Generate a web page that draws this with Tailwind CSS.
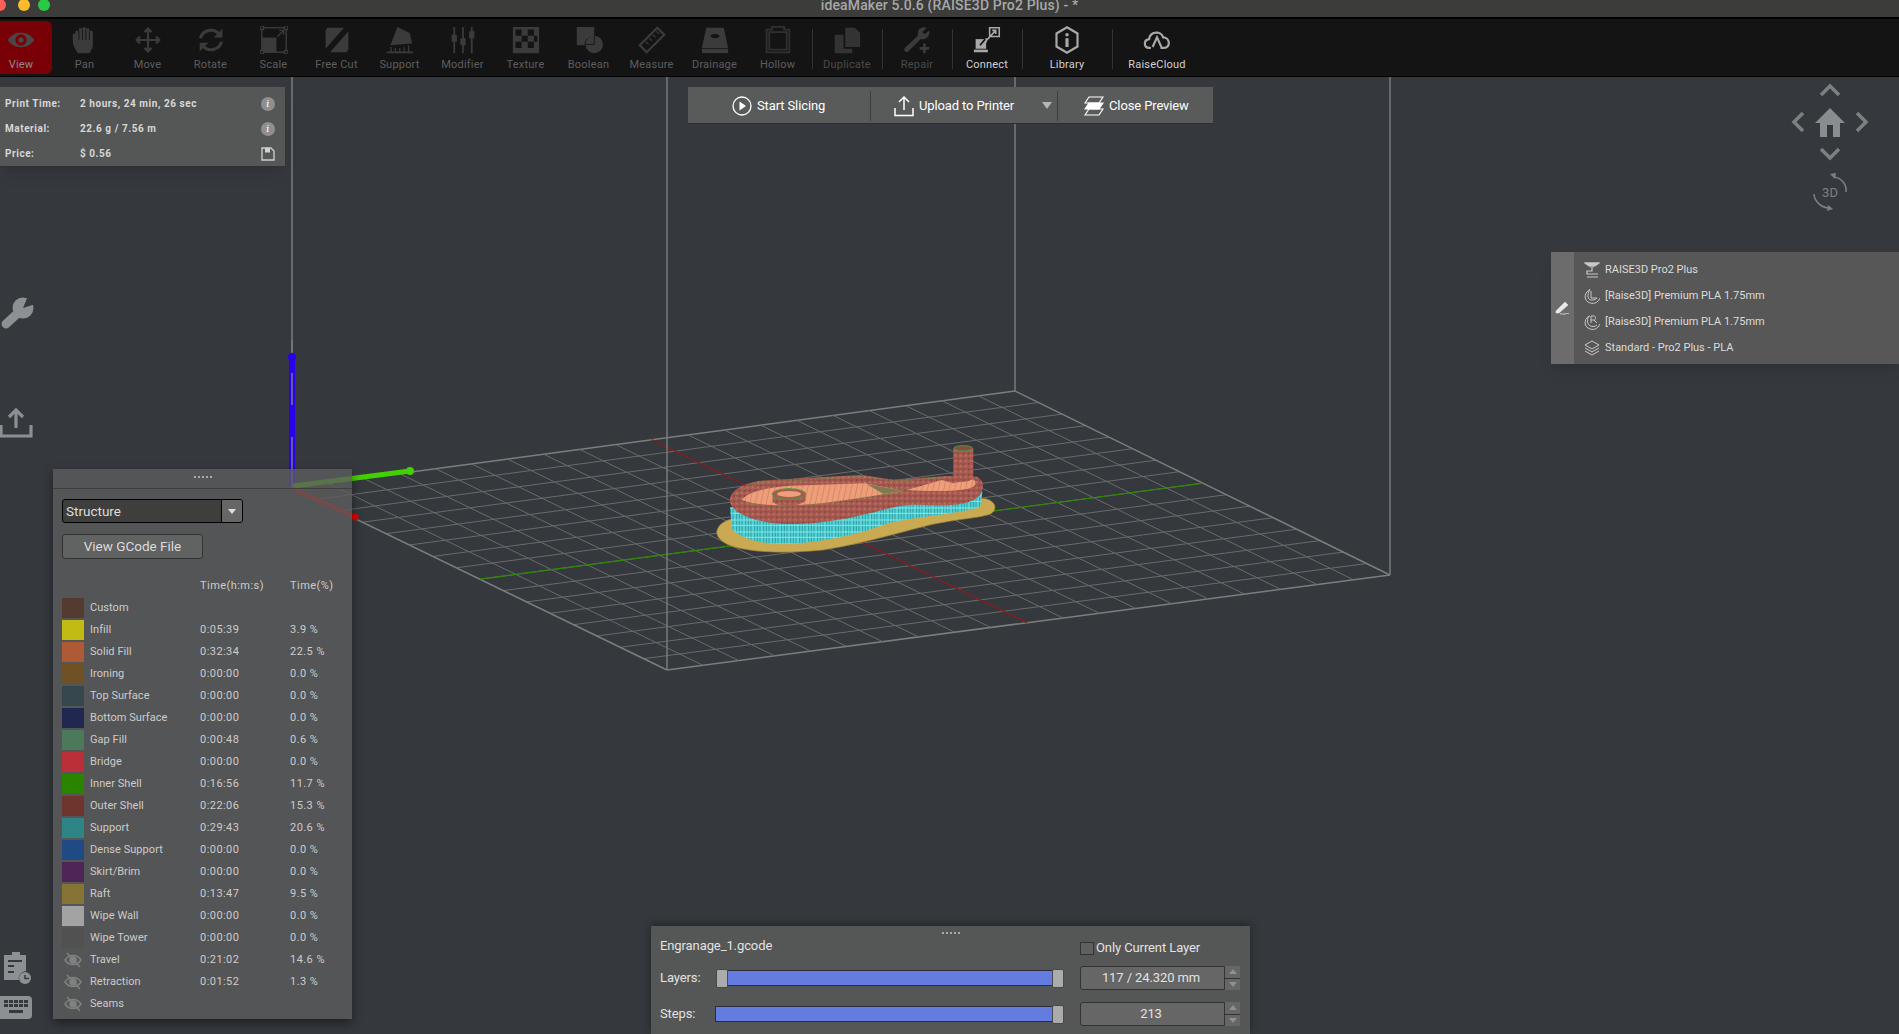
<!DOCTYPE html>
<html lang="en">
<head>
<meta charset="UTF-8">
<title>ideaMaker</title>
<script src="https://cdn.jsdelivr.net/npm/@tailwindcss/browser@4"></script>
</head>
<body class="bg-[#35393e] font-['Roboto',sans-serif] overflow-hidden">
<div class="relative w-[1899px] h-[1034px] overflow-hidden">

  <!-- 3D scene -->
  <svg id="scene" class="absolute inset-0" width="1899" height="1034" viewBox="0 0 1899 1034" fill="none">
    <defs>
      <pattern id="sup" width="27" height="36" patternUnits="userSpaceOnUse">
        <rect width="27" height="36" fill="#52d3d6"/>
        <path d="M5 0v36M13 0v36M21 0v36" stroke="#2f9ba3" stroke-width="3"/>
        <path d="M0 12h27M0 28h27" stroke="#86e8e8" stroke-width="3"/>
      </pattern>
      <pattern id="shell" width="16" height="16" patternUnits="userSpaceOnUse">
        <rect width="16" height="16" fill="#a85a50"/>
        <circle cx="4" cy="4" r="2.500" fill="#75393a"/>
        <circle cx="12" cy="11" r="2.500" fill="#c78070"/>
        <circle cx="12" cy="3" r="1.500" fill="#8c4a44"/>
      </pattern>
      <pattern id="fill" width="16" height="16" patternUnits="userSpaceOnUse" patternTransform="rotate(12)">
        <rect width="16" height="16" fill="#ee9e7a"/>
        <path d="M4 0v16" stroke="#d98562" stroke-width="3"/>
      </pattern>
    </defs>
    <g id="grid"></g>
    <path d="M292 76V488M1015 76V391M1390 76V575M667 76V670" stroke="#777b7e" stroke-width="1.5"/>
    <!-- axes -->
    <path d="M292 357V488" stroke="#2a00f0" stroke-width="6"/>
    <circle cx="292" cy="357" r="4" fill="#2a00f0"/>
    <path d="M292 340V352M292 373V405M292 437V488" stroke="#777b7e" stroke-width="1.5"/>
    <path d="M293 486L410 471" stroke="#42d000" stroke-width="5"/>
    <circle cx="410" cy="471" r="4" fill="#42d000"/>
    <path d="M293 489L355 517" stroke="#e00000" stroke-width="4"/>
    <circle cx="355" cy="517" r="3.5" fill="#e00000"/>
    <!-- printed model, drawn in a 3x space -->
    <g transform="translate(690 420) scale(.3333)">
      <path d="M80 335C85 312 105 302 130 295L880 235C915 240 925 265 905 280C880 295 800 295 700 320C600 345 520 370 400 390C300 400 200 400 130 380C100 370 80 355 80 335Z" fill="#c9aa52" stroke="#8f7a35" stroke-width="2"/>
      <path d="M120 262L125 325C150 360 230 375 300 372C400 365 500 345 600 308C680 290 780 285 870 262L878 215L500 240Z" fill="url(#sup)"/>
      <path d="M120 235C125 210 160 190 210 182L510 165C560 170 600 182 640 178L770 168L860 170C882 180 884 202 870 225C850 250 800 260 700 255C640 250 600 265 540 280C480 295 400 310 320 312C250 315 180 300 150 280C125 265 118 250 120 235Z" fill="url(#shell)"/>
      <path d="M155 240C175 215 225 203 300 197L525 190L640 212C590 222 520 232 430 245C340 258 210 262 155 240Z" fill="url(#fill)"/>
      <path d="M650 210L755 180L790 190L850 178C862 188 858 200 835 206C780 216 700 214 650 210Z" fill="url(#fill)"/>
      <path d="M530 192L640 212L580 222Z" fill="#7f7a50"/>
      <path d="M136 232C150 205 190 192 240 186L510 170C560 172 600 186 640 182L770 172M150 244C200 265 340 260 430 247C520 234 590 224 650 212" stroke="#6f9a40" stroke-width="4" stroke-dasharray="3 6"/>
      <path d="M248 222V245C260 262 335 262 347 240V222Z" fill="url(#shell)"/>
      <ellipse cx="297" cy="222" rx="50" ry="16" fill="#a85a50" stroke="#4a9a3a" stroke-width="3"/>
      <ellipse cx="297" cy="222" rx="36" ry="9" fill="#ee9e7a"/>
      <path d="M790 85V172C800 190 840 190 850 172V85Z" fill="url(#shell)"/>
      <ellipse cx="820" cy="85" rx="28" ry="8" fill="#8c4a44" stroke="#4a9a3a" stroke-width="3"/>
    </g>
  </svg>

  <!-- title bar -->
  <header class="relative h-[19px] bg-[#3c3c3b] border-b-2 border-black overflow-hidden flex justify-center">
    <span class="absolute left-[-6px] top-[-1px] w-3 h-3 rounded-full bg-[#fb5f58]"></span>
    <span class="absolute left-[18px] top-[-1px] w-3 h-3 rounded-full bg-[#fdbc2f]"></span>
    <span class="absolute left-[38px] top-[-1px] w-3 h-3 rounded-full bg-[#29c941]"></span>
    <span class="mt-[-5px] text-[14px] leading-5 font-medium text-[#a8a8a8] tracking-[.15px]">ideaMaker 5.0.6 (RAISE3D Pro2 Plus) - *</span>
  </header>

  <!-- toolbar -->
  <nav class="relative h-[58px] bg-[#141414] border-b border-black flex items-stretch text-[11px] text-center tracking-[.2px] text-[#5e5e5e]">
    <div class="w-[52px] h-[53px] mt-[2px] bg-[#7a0008] rounded-r-md flex flex-col items-center pt-[5px] pr-[10px] text-[#8d8d8d] shrink-0">
      <svg width="28" height="28" viewBox="0 0 32 32"><path d="M1 16C8 5 24 5 31 16C24 27 8 27 1 16Z" fill="#4b4648"/><circle cx="16" cy="16" r="6.5" fill="#7a0008"/><circle cx="16" cy="16" r="3" fill="#4b4648"/></svg>
      <span class="mt-[5px] leading-3">View</span>
    </div>
    <div class="w-[63px] ml-px pt-[7px] flex flex-col items-center shrink-0">
      <svg width="28" height="28" viewBox="0 0 32 32" fill="#3b3b3b"><path d="M8 31C4 26 2 22 2 16V10c0-2 3-2 3 0v-3c0-2 4-2 4 0V4c0-2 4-2 4 0V3c0-2 4-2 4 0v1c0-2 4-2 4 0v3c0-2 4-2 4 0v14c0 4-2 7-4 10Z"/><path d="M9 5V16M13 4V16M17 4V16M21 6V16" stroke="#141414" stroke-width="1"/></svg>
      <span class="mt-[5px] leading-3">Pan</span>
    </div>
    <div class="w-[63px] pt-[7px] flex flex-col items-center shrink-0">
      <svg width="28" height="28" viewBox="0 0 32 32" stroke="#3b3b3b" stroke-width="2.5" fill="none"><path d="M16 3V29M3 16H29M12 7l4-4 4 4M12 25l4 4 4-4M7 12l-4 4 4 4M25 12l4 4-4 4"/></svg>
      <span class="mt-[5px] leading-3">Move</span>
    </div>
    <div class="w-[63px] pt-[7px] flex flex-col items-center shrink-0">
      <svg width="28" height="28" viewBox="0 0 32 32" stroke="#3b3b3b" stroke-width="3.5" fill="none"><path d="M4 14C6 5 19 1 26 10M28 18C26 27 13 31 6 22"/><path d="M29 3v10H19z" fill="#3b3b3b" stroke="none"/><path d="M3 29V19h10z" fill="#3b3b3b" stroke="none"/></svg>
      <span class="mt-[5px] leading-3">Rotate</span>
    </div>
    <div class="w-[63px] pt-[7px] flex flex-col items-center shrink-0">
      <svg width="28" height="28" viewBox="0 0 32 32" stroke="#3b3b3b" stroke-width="1.6" fill="none"><rect x="2" y="2" width="28" height="28"/><rect x="2" y="14" width="16" height="16" fill="#3b3b3b"/><path d="M20 12l7-7M22 5h5v5"/><rect x="0" y="0" width="4" height="4" fill="#141414"/><rect x="28" y="0" width="4" height="4" fill="#141414"/><rect x="0" y="28" width="4" height="4" fill="#141414"/><rect x="28" y="28" width="4" height="4" fill="#141414"/></svg>
      <span class="mt-[5px] leading-3">Scale</span>
    </div>
    <div class="w-[63px] pt-[7px] flex flex-col items-center shrink-0">
      <svg width="28" height="28" viewBox="0 0 32 32" fill="#3b3b3b"><path d="M5 2H24L3 26V5ZM29 6V27L27 30H8Z"/></svg>
      <span class="mt-[5px] leading-3">Free Cut</span>
    </div>
    <div class="w-[63px] pt-[7px] flex flex-col items-center shrink-0">
      <svg width="28" height="28" viewBox="0 0 32 32" fill="#3b3b3b"><path d="M13 1L27 8L30 20L5 22ZM1 29H31V31H1ZM5 24h1.500v5H5ZM10 25h1.500v4H10ZM15 25h1.500v4H15ZM20 24h1.500v5H20ZM25 22h1.500v7H25Z"/></svg>
      <span class="mt-[5px] leading-3">Support</span>
    </div>
    <div class="w-[63px] pt-[7px] flex flex-col items-center shrink-0">
      <svg width="28" height="28" viewBox="0 0 32 32" fill="#3b3b3b"><path d="M5 1h2v9h2v8H7v13H5V18H3v-8h2ZM15 1h2v13h2v8h-2v9h-2v-9h-2v-8h2ZM25 1h2v5h2v8h-2v17h-2V14h-2V6h2Z"/></svg>
      <span class="mt-[5px] leading-3">Modifier</span>
    </div>
    <div class="w-[63px] pt-[7px] flex flex-col items-center shrink-0">
      <svg width="28" height="28" viewBox="0 0 32 32" fill="#3b3b3b"><path fill-rule="evenodd" d="M1 1H31V31H1ZM4 4V11H11V4ZM18 4V11H25V4ZM11 11V18H18V11ZM25 11V18H29V11ZM4 18V25H11V18ZM18 18V25H25V18Z"/></svg>
      <span class="mt-[5px] leading-3">Texture</span>
    </div>
    <div class="w-[63px] pt-[7px] flex flex-col items-center shrink-0">
      <svg width="28" height="28" viewBox="0 0 32 32" fill="#3b3b3b"><path d="M2 1H22V12C14 12 11 17 11 22H2Z"/><circle cx="22" cy="21" r="10"/><path d="M22 11V21H12" stroke="#141414" stroke-width="1" fill="none"/></svg>
      <span class="mt-[5px] leading-3">Boolean</span>
    </div>
    <div class="w-[63px] pt-[7px] flex flex-col items-center shrink-0">
      <svg width="28" height="28" viewBox="0 0 32 32" fill="none" stroke="#3b3b3b" stroke-width="2.500"><path d="M22 2L30 10L10 30L2 22Z"/><path d="M9 18l3 3M13 14l3 3M17 10l3 3M21 6l3 3" stroke-width="1.500"/></svg>
      <span class="mt-[5px] leading-3">Measure</span>
    </div>
    <div class="w-[63px] pt-[7px] flex flex-col items-center shrink-0">
      <svg width="28" height="28" viewBox="0 0 32 32" fill="#3b3b3b"><path fill-rule="evenodd" d="M6 2H26L31 25H1ZM16 9c-3 0-5 1-5 2.500s2 2.500 5 2.500 5-1 5-2.500-2-2.500-5-2.500Z"/><rect x="1" y="26" width="30" height="5"/></svg>
      <span class="mt-[5px] leading-3">Drainage</span>
    </div>
    <div class="w-[63px] pt-[7px] flex flex-col items-center shrink-0">
      <svg width="28" height="28" viewBox="0 0 32 32" fill="none" stroke="#303030" stroke-width="2"><path d="M3 30V4H9V1H23V4H29V30Z"/><rect x="6" y="7" width="20" height="20"/></svg>
      <span class="mt-[5px] leading-3">Hollow</span>
    </div>
    <div class="w-[70px] ml-[3px] pt-[7px] flex flex-col items-center shrink-0 relative text-[#4a4a4a] before:absolute before:left-0 before:top-[10px] before:h-[40px] before:w-px before:bg-[#333]">
      <svg width="28" height="28" viewBox="0 0 32 32" fill="#333"><path d="M14 2H25L31 8V24H14Z"/><path d="M2 10H12V26H22V31H2Z"/></svg>
      <span class="mt-[5px] leading-3">Duplicate</span>
    </div>
    <div class="w-[70px] pt-[7px] flex flex-col items-center shrink-0 relative text-[#4a4a4a] before:absolute before:left-0 before:top-[10px] before:h-[40px] before:w-px before:bg-[#333]">
      <svg width="28" height="28" viewBox="0 0 32 32" fill="#3b3b3b"><path d="M27 2C22 0 17 3 17 8L17 11L2 25C0 28 4 31 6 29L20 15L24 15C28 14 31 10 30 5L25 9L22 7Z"/><path d="M23 20h3v4h4v3h-4v4h-3v-4h-4v-3h4Z"/></svg>
      <span class="mt-[5px] leading-3">Repair</span>
    </div>
    <div class="w-[70px] pt-[7px] flex flex-col items-center shrink-0 relative text-[#d0d0d0] before:absolute before:left-0 before:top-[10px] before:h-[40px] before:w-px before:bg-[#333]">
      <svg width="28" height="28" viewBox="0 0 32 32" fill="none" stroke="#a8a8a8" stroke-width="1.800"><path d="M19 2H30V12H19ZM14 18L26 5M22 5h4v4M15 14v4h-4" /><path d="M3 15H15V26H3Z" fill="#a8a8a8" stroke="none"/><path d="M1 30H17V27H1Z" fill="#a8a8a8" stroke="none"/><path d="M8 22L14 15" stroke="#141414"/></svg>
      <span class="mt-[5px] leading-3">Connect</span>
    </div>
    <div class="w-[90px] pt-[7px] flex flex-col items-center shrink-0 relative text-[#d0d0d0] before:absolute before:left-0 before:top-[10px] before:h-[40px] before:w-px before:bg-[#333]">
      <svg width="28" height="28" viewBox="0 0 32 32" fill="none"><path d="M16 1.500L28 8.500V23.500L16 30.500L4 23.500V8.500Z" stroke="#a8a8a8" stroke-width="2.500"/><circle cx="16" cy="10" r="2" fill="#a8a8a8"/><rect x="14.200" y="14" width="3.600" height="10" fill="#a8a8a8"/></svg>
      <span class="mt-[5px] leading-3">Library</span>
    </div>
    <div class="w-[90px] pt-[7px] flex flex-col items-center shrink-0 relative text-[#d0d0d0] before:absolute before:left-0 before:top-[10px] before:h-[40px] before:w-px before:bg-[#333]">
      <svg width="30" height="28" viewBox="0 0 32 32" fill="none" stroke="#a8a8a8" stroke-width="2.500"><path d="M9 25H7C1 25 0 16 7 15C8 6 21 5 23 13C31 13 32 25 24 25H20M11 24L16 13L21 24"/></svg>
      <span class="mt-[5px] leading-3">RaiseCloud</span>
    </div>
  </nav>

  <!-- print info -->
  <section class="absolute left-0 top-[87px] w-[285px] h-[79px] bg-[#555656] shadow-lg text-[10px] font-bold text-[#d8d8d8] tracking-[.55px] pt-[4px] pl-[5px] pr-[10px] flex flex-col">
    <div class="h-[25px] flex items-center"><span class="w-[75px]">Print Time:</span><span class="flex-1">2 hours, 24 min, 26 sec</span><span class="w-[14px] h-[14px] rounded-full bg-[#8f8f8f] text-white italic font-normal font-serif text-center text-[11px] leading-[14px]">i</span></div>
    <div class="h-[25px] flex items-center"><span class="w-[75px]">Material:</span><span class="flex-1">22.6 g / 7.56 m</span><span class="w-[14px] h-[14px] rounded-full bg-[#8f8f8f] text-white italic font-normal font-serif text-center text-[11px] leading-[14px]">i</span></div>
    <div class="h-[25px] flex items-center"><span class="w-[75px]">Price:</span><span class="flex-1">$ 0.56</span>
      <svg width="14" height="14" viewBox="0 0 14 14" fill="none"><path d="M1 1H10L13 4V13H1Z" stroke="#d0d0d0" stroke-width="1.300"/><rect x="4" y="1" width="5" height="4.500" fill="#d0d0d0"/></svg>
    </div>
  </section>

  <!-- slicing actions -->
  <div class="absolute left-[688px] top-[87px] w-[525px] h-[37px] bg-[#595a5a] border-b border-[#2e2e2e] flex items-center pt-[2px] text-[13px] tracking-[-.12px] text-white">
    <div class="w-[183px] h-[30px] flex items-center pl-[44px] gap-[5px] border-r border-[#3e3e3e]">
      <svg width="20" height="22" viewBox="0 0 20 22" fill="none"><circle cx="10" cy="11" r="9" stroke="#fff" stroke-width="1.300"/><path d="M7.500 6.500L14 11L7.500 15.500Z" fill="#fff"/></svg>
      <span>Start Slicing</span>
    </div>
    <div class="w-[187px] h-[30px] flex items-center pl-[23px] gap-[5px] border-r border-[#3e3e3e] relative">
      <svg width="20" height="22" viewBox="0 0 20 22" fill="none" stroke="#fff" stroke-width="1.500"><path d="M10 15V2M5 7l5-5 5 5"/><path d="M1 13V20.500H19V13"/></svg>
      <span>Upload to Printer</span>
      <span class="absolute right-[5px] top-[11px] w-0 h-0 border-x-[5px] border-x-transparent border-t-[7px] border-t-[#b5b5b5]"></span>
    </div>
    <div class="flex-1 h-[30px] flex items-center pl-[26px] gap-[5px]">
      <svg width="20" height="22" viewBox="0 0 20 22" fill="none" stroke="#fff" stroke-width="1.200"><path d="M5 2H19L15 8H1Z"/><path d="M5 8H19L15 14H1Z" fill="#fff"/><path d="M5 14H19L15 20H1Z"/></svg>
      <span>Close Preview</span>
    </div>
  </div>

  <!-- view navigation -->
  <svg class="absolute left-[1785px] top-[78px]" width="90" height="135" viewBox="0 0 90 135" fill="none" stroke="#7d8082" stroke-width="3.500">
    <path d="M36 17L45 8L54 17"/>
    <path d="M18 35L9 44L18 53M72 35L81 44L72 53"/>
    <path d="M36 71L45 80L54 71"/>
    <path d="M45 30L60 45H55V59H48V47H42V59H35V45H30Z" fill="#8a8d8f" stroke="none"/>
    <path d="M49 99C57 100 62 107 61 114M29 116C29 122 35 129 43 130" stroke-width="1.500"/>
    <path d="M45 96l6-1-1 6ZM48 131l-6 2 1-6Z" fill="#7d8082" stroke="none"/>
    <text x="45" y="119" text-anchor="middle" font-family="Roboto" font-size="13" fill="#7d8082" stroke="none">3D</text>
  </svg>

  <!-- printer / filament / profile summary -->
  <section class="absolute left-[1551px] top-[252px] right-0 h-[112px] bg-[#565756] shadow-lg flex text-[11px] text-[#dcdcdc]">
    <div class="w-[23px] bg-[#6b6c6b] flex items-center justify-center">
      <svg width="15" height="14" viewBox="0 0 15 14" fill="#e8e8e8"><path d="M1 10L10 1L13 4L4 12L1 12ZM5 13c2-1 3 1 5 0s2 0 4-.5" stroke="#e8e8e8" stroke-width=".6"/></svg>
    </div>
    <div class="flex flex-col pt-[5px] pl-[10px]">
      <div class="h-[26px] flex items-center gap-[5px]"><svg width="16" height="17" viewBox="0 0 16 17" fill="none" stroke="#c8c8c8" stroke-width="1.200"><path d="M1 1H15M4 3H12M6 5H10M8 6V9H3V12H14M3 15H14" /><path d="M1 1H15L11 4H5Z" fill="#c8c8c8"/></svg><span>RAISE3D Pro2 Plus</span></div>
      <div class="h-[26px] flex items-center gap-[5px]"><svg width="16" height="17" viewBox="0 0 16 17" fill="none" stroke="#c8c8c8" stroke-width="1"><path d="M6 2C1 3 -1 11 4 14S14 15 16 10M6 1C4 5 3 9 5 11S11 12 13 10M7 3V10H13"/></svg><span>[Raise3D] Premium PLA 1.75mm</span></div>
      <div class="h-[26px] flex items-center gap-[5px]"><svg width="16" height="17" viewBox="0 0 16 17" fill="none" stroke="#c8c8c8" stroke-width="1"><path d="M6 2C1 3 -1 11 4 14S14 15 16 10M5 2C3 5 3 9 5 11S11 13 13 11M7 9V2H10C12 2 12 6 10 6H7M10 6L13 9"/></svg><span>[Raise3D] Premium PLA 1.75mm</span></div>
      <div class="h-[26px] flex items-center gap-[5px]"><svg width="16" height="17" viewBox="0 0 16 17" fill="none" stroke="#c8c8c8" stroke-width="1"><path d="M8 1L15 5L8 9L1 5ZM1 8L8 12L15 8M1 11L8 15L15 11"/></svg><span>Standard - Pro2 Plus - PLA</span></div>
    </div>
  </section>

  <!-- left side icons -->
  <svg class="absolute left-0 top-[296px]" width="34" height="36" viewBox="0 0 34 36" fill="#8d9092"><circle cx="23" cy="12" r="10.500"/><path d="M19 16L6 28" stroke="#8d9092" stroke-width="9" stroke-linecap="round"/><path d="M23 12L28 0H36V8Z" fill="#35393e"/></svg>
  <svg class="absolute left-0 top-[406px]" width="34" height="34" viewBox="0 0 34 34" fill="none" stroke="#8d9092" stroke-width="3.200"><path d="M16 22V4M9 11L16 4L23 11"/><path d="M1 19V30H31V19"/></svg>
  <svg class="absolute left-[3px] top-[952px]" width="28" height="34" viewBox="0 0 28 34" fill="#8d9092"><path d="M9 0H17V3H23V19C17 20 15 24 16 28H1V3H9Z"/><path d="M5 9H19M5 14H11M5 20H11" stroke="#35393e" stroke-width="2"/><circle cx="22" cy="26" r="6"/><path d="M22 23V26.500H26" stroke="#35393e" stroke-width="1.500" fill="none"/></svg>
  <div class="absolute left-0 top-[996px] w-8 h-[23px] rounded-r bg-[#8d9092] grid grid-cols-5 gap-px p-[4px] pb-[9px] content-start">
    <i class="h-[3px] bg-[#35393e]"></i><i class="h-[3px] bg-[#35393e]"></i><i class="h-[3px] bg-[#35393e]"></i><i class="h-[3px] bg-[#35393e]"></i><i class="h-[3px] bg-[#35393e]"></i>
    <i class="h-[3px] bg-[#35393e]"></i><i class="h-[3px] bg-[#35393e]"></i><i class="h-[3px] bg-[#35393e]"></i><i class="h-[3px] bg-[#35393e]"></i><i class="h-[3px] bg-[#35393e]"></i>
    <i class="col-start-2 col-span-3 h-[3px] mt-[2px] bg-[#35393e]"></i>
  </div>

  <!-- structure legend -->
  <section class="absolute left-[53px] top-[469px] w-[299px] h-[550px] bg-[#5c5d5d]/80 shadow-[0_4px_10px_rgba(0,0,0,.45)] text-[11px] tracking-[.45px] text-[#cccccc]">
    <div class="h-[20px] border-b border-[#3e3e3e] flex justify-center pt-[7px]"><span class="w-[18px] h-[2px] border-t-2 border-dotted border-[#aaa]"></span></div>
    <div class="ml-[9px] mt-[10px] w-[181px] h-[24px] bg-[#3e3e3d] border border-black rounded-[3px] flex items-center text-[13.5px] tracking-normal text-[#dcdcdc]">
      <span class="flex-1 pl-[3px]">Structure</span>
      <span class="w-[21px] h-full bg-[#666] border-l border-black flex items-center justify-center rounded-r-[2px]"><i class="w-0 h-0 border-x-[4px] border-x-transparent border-t-[5px] border-t-[#e0e0e0]"></i></span>
    </div>
    <div class="ml-[9px] mt-[11px] w-[141px] h-[25px] bg-[#616262] border border-[#333] rounded-[3px] text-center text-[13.5px] leading-[23px] tracking-normal text-[#dcdcdc]">View GCode File</div>
    <div class="h-[13px] mt-[20px] pl-[147px] flex leading-[13px]"><span class="w-[90px]">Time(h:m:s)</span><span>Time(%)</span></div>
    <div class="mt-[5px] ml-[9px] flex flex-col">
      <div class="h-[22px] flex items-center"><i class="w-[22px] h-[20px] mr-[6px] bg-[#553a30]"></i><span class="w-[110px] tracking-[.05px]">Custom</span></div>
      <div class="h-[22px] flex items-center"><i class="w-[22px] h-[20px] mr-[6px] bg-[#c2bb14]"></i><span class="w-[110px] tracking-[.05px]">Infill</span><span class="w-[90px]">0:05:39</span><span>3.9 %</span></div>
      <div class="h-[22px] flex items-center"><i class="w-[22px] h-[20px] mr-[6px] bg-[#ae5a36]"></i><span class="w-[110px] tracking-[.05px]">Solid Fill</span><span class="w-[90px]">0:32:34</span><span>22.5 %</span></div>
      <div class="h-[22px] flex items-center"><i class="w-[22px] h-[20px] mr-[6px] bg-[#6e5226]"></i><span class="w-[110px] tracking-[.05px]">Ironing</span><span class="w-[90px]">0:00:00</span><span>0.0 %</span></div>
      <div class="h-[22px] flex items-center"><i class="w-[22px] h-[20px] mr-[6px] bg-[#36474e]"></i><span class="w-[110px] tracking-[.05px]">Top Surface</span><span class="w-[90px]">0:00:00</span><span>0.0 %</span></div>
      <div class="h-[22px] flex items-center"><i class="w-[22px] h-[20px] mr-[6px] bg-[#212850]"></i><span class="w-[110px] tracking-[.05px]">Bottom Surface</span><span class="w-[90px]">0:00:00</span><span>0.0 %</span></div>
      <div class="h-[22px] flex items-center"><i class="w-[22px] h-[20px] mr-[6px] bg-[#4a7a5a]"></i><span class="w-[110px] tracking-[.05px]">Gap Fill</span><span class="w-[90px]">0:00:48</span><span>0.6 %</span></div>
      <div class="h-[22px] flex items-center"><i class="w-[22px] h-[20px] mr-[6px] bg-[#bb2f38]"></i><span class="w-[110px] tracking-[.05px]">Bridge</span><span class="w-[90px]">0:00:00</span><span>0.0 %</span></div>
      <div class="h-[22px] flex items-center"><i class="w-[22px] h-[20px] mr-[6px] bg-[#2b8400]"></i><span class="w-[110px] tracking-[.05px]">Inner Shell</span><span class="w-[90px]">0:16:56</span><span>11.7 %</span></div>
      <div class="h-[22px] flex items-center"><i class="w-[22px] h-[20px] mr-[6px] bg-[#6e352f]"></i><span class="w-[110px] tracking-[.05px]">Outer Shell</span><span class="w-[90px]">0:22:06</span><span>15.3 %</span></div>
      <div class="h-[22px] flex items-center"><i class="w-[22px] h-[20px] mr-[6px] bg-[#2d8585]"></i><span class="w-[110px] tracking-[.05px]">Support</span><span class="w-[90px]">0:29:43</span><span>20.6 %</span></div>
      <div class="h-[22px] flex items-center"><i class="w-[22px] h-[20px] mr-[6px] bg-[#1f4a84]"></i><span class="w-[110px] tracking-[.05px]">Dense Support</span><span class="w-[90px]">0:00:00</span><span>0.0 %</span></div>
      <div class="h-[22px] flex items-center"><i class="w-[22px] h-[20px] mr-[6px] bg-[#4f2558]"></i><span class="w-[110px] tracking-[.05px]">Skirt/Brim</span><span class="w-[90px]">0:00:00</span><span>0.0 %</span></div>
      <div class="h-[22px] flex items-center"><i class="w-[22px] h-[20px] mr-[6px] bg-[#867434]"></i><span class="w-[110px] tracking-[.05px]">Raft</span><span class="w-[90px]">0:13:47</span><span>9.5 %</span></div>
      <div class="h-[22px] flex items-center"><i class="w-[22px] h-[20px] mr-[6px] bg-[#a3a3a3]"></i><span class="w-[110px] tracking-[.05px]">Wipe Wall</span><span class="w-[90px]">0:00:00</span><span>0.0 %</span></div>
      <div class="h-[22px] flex items-center"><i class="w-[22px] h-[20px] mr-[6px] bg-[#505150]"></i><span class="w-[110px] tracking-[.05px]">Wipe Tower</span><span class="w-[90px]">0:00:00</span><span>0.0 %</span></div>
      <div class="h-[22px] flex items-center"><svg class="w-[22px] h-[16px] mr-[6px]" viewBox="0 0 22 16" fill="none" stroke="#808181" stroke-width="1.500"><path d="M3 8C7 2 15 2 19 8C15 14 7 14 3 8Z"/><circle cx="11" cy="8" r="3" fill="#808181"/><path d="M5 1L18 15"/></svg><span class="w-[110px] tracking-[.05px]">Travel</span><span class="w-[90px]">0:21:02</span><span>14.6 %</span></div>
      <div class="h-[22px] flex items-center"><svg class="w-[22px] h-[16px] mr-[6px]" viewBox="0 0 22 16" fill="none" stroke="#808181" stroke-width="1.500"><path d="M3 8C7 2 15 2 19 8C15 14 7 14 3 8Z"/><circle cx="11" cy="8" r="3" fill="#808181"/><path d="M5 1L18 15"/></svg><span class="w-[110px] tracking-[.05px]">Retraction</span><span class="w-[90px]">0:01:52</span><span>1.3 %</span></div>
      <div class="h-[22px] flex items-center"><svg class="w-[22px] h-[16px] mr-[6px]" viewBox="0 0 22 16" fill="none" stroke="#808181" stroke-width="1.500"><path d="M3 8C7 2 15 2 19 8C15 14 7 14 3 8Z"/><circle cx="11" cy="8" r="3" fill="#808181"/><path d="M5 1L18 15"/></svg><span class="w-[110px] tracking-[.05px]">Seams</span></div>
    </div>
  </section>

  <!-- gcode preview controls -->
  <section class="absolute left-[651px] top-[926px] w-[599px] h-[108px] bg-[#555656] shadow-[0_-2px_8px_rgba(0,0,0,.4)] text-[13px] tracking-[-.1px] text-[#e2e2e2]">
    <div class="h-[13px] flex justify-center pt-[6px]"><span class="w-[18px] h-[2px] border-t-2 border-dotted border-[#aaa]"></span></div>
    <div class="flex items-center h-[18px] pl-[9px] pr-[10px]">
      <span class="w-[420px] -mt-[5px]">Engranage_1.gcode</span>
      <i class="w-[14px] h-[13px] bg-[#5f6060] border border-[#333]"></i>
      <span class="ml-[2px]">Only Current Layer</span>
    </div>
    <div class="flex items-center h-[24px] mt-[9px] pl-[9px]">
      <span class="w-[56px]">Layers:</span>
      <div class="relative w-[348px] h-[16px] bg-[#647ce0] border border-[#2d2d3a]">
        <i class="absolute left-[-1px] top-[-2px] w-[12px] h-[19px] bg-[#aaabaa] border border-[#4a4a4a] rounded-[2px]"></i>
        <i class="absolute right-[-1px] top-[-2px] w-[12px] h-[19px] bg-[#aaabaa] border border-[#4a4a4a] rounded-[2px]"></i>
      </div>
      <div class="ml-[16px] w-[160px] h-[24px] flex">
        <div class="flex-1 bg-[#656665] border border-[#333] rounded-l-[3px] text-center leading-[22px] pr-[3px]">117 / 24.320 mm</div>
        <div class="w-[15px] flex flex-col gap-px bg-[#333]">
          <span class="flex-1 bg-[#656665] flex items-center justify-center"><i class="w-0 h-0 border-x-[4px] border-x-transparent border-b-[5px] border-b-[#8f8f8f]"></i></span>
          <span class="flex-1 bg-[#656665] flex items-center justify-center"><i class="w-0 h-0 border-x-[4px] border-x-transparent border-t-[5px] border-t-[#8f8f8f]"></i></span>
        </div>
      </div>
    </div>
    <div class="flex items-center h-[24px] mt-[12px] pl-[9px]">
      <span class="w-[55px]">Steps:</span>
      <div class="relative w-[349px] h-[16px] bg-[#647ce0] border border-[#2d2d3a]">
        <i class="absolute right-[-1px] top-[-2px] w-[12px] h-[19px] bg-[#aaabaa] border border-[#4a4a4a] rounded-[2px]"></i>
      </div>
      <div class="ml-[16px] w-[160px] h-[24px] flex">
        <div class="flex-1 bg-[#656665] border border-[#333] rounded-l-[3px] text-center leading-[22px] pr-[3px]">213</div>
        <div class="w-[15px] flex flex-col gap-px bg-[#333]">
          <span class="flex-1 bg-[#656665] flex items-center justify-center"><i class="w-0 h-0 border-x-[4px] border-x-transparent border-b-[5px] border-b-[#8f8f8f]"></i></span>
          <span class="flex-1 bg-[#656665] flex items-center justify-center"><i class="w-0 h-0 border-x-[4px] border-x-transparent border-t-[5px] border-t-[#8f8f8f]"></i></span>
        </div>
      </div>
    </div>
  </section>
</div>

<script>
  // bed grid: maps a unit square on to the four bed corners
  var q = [[1015,391],[1390,575],[667,670],[292,488]];
  var dx1=q[1][0]-q[2][0], dx2=q[3][0]-q[2][0], dx3=q[0][0]-q[1][0]+q[2][0]-q[3][0];
  var dy1=q[1][1]-q[2][1], dy2=q[3][1]-q[2][1], dy3=q[0][1]-q[1][1]+q[2][1]-q[3][1];
  var den=dx1*dy2-dx2*dy1, g=(dx3*dy2-dx2*dy3)/den, h=(dx1*dy3-dx3*dy1)/den;
  var a=q[1][0]-q[0][0]+g*q[1][0], b=q[3][0]-q[0][0]+h*q[3][0];
  var d=q[1][1]-q[0][1]+g*q[1][1], e=q[3][1]-q[0][1]+h*q[3][1];
  function pt(u,v){ var w=g*u+h*v+1; return ((a*u+b*v+q[0][0])/w).toFixed(1)+' '+((d*u+e*v+q[0][1])/w).toFixed(1); }
  var s='', nu=16, nv=20;
  for (var i=0;i<=nu;i++){
    var edge=(i==0||i==nu);
    s+='<path d="M'+pt(i/nu,0)+'L'+pt(i/nu,1)+'" stroke="'+(edge?'#7c7d7e':'#696a6b')+'" stroke-width="'+(edge?1.5:1)+'"/>';
  }
  for (var j=0;j<=nv;j++){
    var edge2=(j==0||j==nv);
    s+='<path d="M'+pt(0,j/nv)+'L'+pt(1,j/nv)+'" stroke="'+(edge2?'#7c7d7e':'#696a6b')+'" stroke-width="'+(edge2?1.5:1)+'"/>';
  }
  s+='<path d="M'+pt(.5,0)+'L'+pt(.5,1)+'" stroke="#2c8a00" stroke-width="1.2"/>';
  s+='<path d="M'+pt(0,.5)+'L'+pt(1,.5)+'" stroke="#8b1010" stroke-width="1.2"/>';
  document.getElementById('grid').innerHTML=s;
</script>
</body>
</html>
